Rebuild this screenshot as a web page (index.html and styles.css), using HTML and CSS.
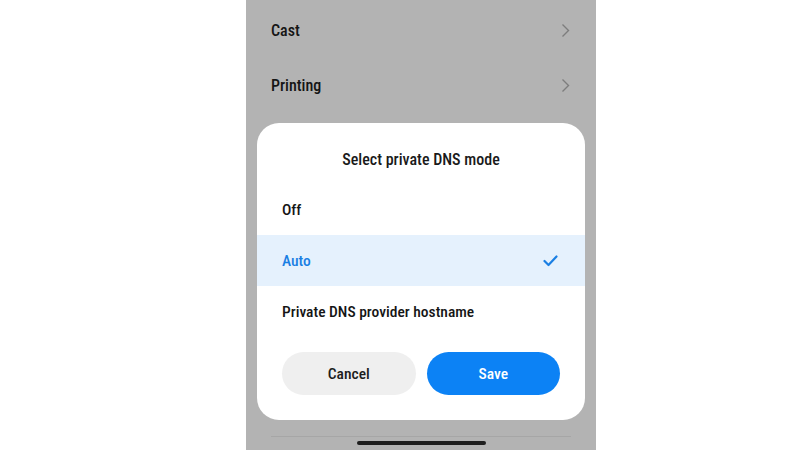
FILE: index.html
```html
<!DOCTYPE html>
<html>
<head>
<meta charset="utf-8">
<link rel="stylesheet" href="styles.css">
</head>
<body>
<div class="phone">
  <div class="list">
    <div class="row"><span>Cast</span>
      <svg class="chev" width="9" height="15" viewBox="0 0 9 15"><path d="M1.5 1.5 L7.5 7.5 L1.5 13.5" fill="none" stroke="#7d7d7d" stroke-width="1.4"/></svg>
    </div>
    <div class="row"><span>Printing</span>
      <svg class="chev" width="9" height="15" viewBox="0 0 9 15"><path d="M1.5 1.5 L7.5 7.5 L1.5 13.5" fill="none" stroke="#7d7d7d" stroke-width="1.4"/></svg>
    </div>
  </div>
  <div class="dialog">
    <div class="title">Select private DNS mode</div>
    <div class="opt">Off</div>
    <div class="opt sel"><span>Auto</span>
      <svg width="15" height="12" viewBox="0 0 15 12"><path d="M1.5 6 L5.5 10 L13.5 1.5" fill="none" stroke="#1a7fe3" stroke-width="2.2" stroke-linecap="round" stroke-linejoin="round"/></svg>
    </div>
    <div class="opt">Private DNS provider hostname</div>
    <div class="btns">
      <div class="btn cancel">Cancel</div>
      <div class="btn save">Save</div>
    </div>
  </div>
  <div class="bottom">
    <div class="divider"></div>
    <div class="home"></div>
  </div>
</div>
</body>
</html>
```
FILE: styles.css
```css
html, body {
  margin: 0;
  padding: 0;
  background: #ffffff;
}
body {
  font-family: Roboto, "Noto Sans", sans-serif;
  font-stretch: condensed;
  font-weight: 500;
  color: #1c1c1c;
}
.phone {
  width: 350px;
  height: 450px;
  margin-left: 246px;
  background: #b3b3b3;
  display: flex;
  flex-direction: column;
  overflow: hidden;
}
.list {
  display: flex;
  flex-direction: column;
  padding-top: 3px;
}
.row {
  height: 55px;
  display: flex;
  align-items: center;
  justify-content: space-between;
  padding: 0 25px 0 25px;
  font-size: 16px;
  color: #151515;
}
.chev {
  margin-right: 1px;
}
.dialog {
  margin: 10px 11px 0 11px;
  height: 297px;
  background: #ffffff;
  border-radius: 22px;
  display: flex;
  flex-direction: column;
  box-sizing: border-box;
}
.title {
  text-align: center;
  font-size: 16px;
  line-height: 20px;
  padding-top: 27px;
  height: 61px;
  box-sizing: border-box;
  color: #1a1a1a;
}
.opt {
  height: 51px;
  display: flex;
  align-items: center;
  justify-content: space-between;
  padding: 0 27px 0 25px;
  font-size: 15.5px;
  color: #151515;
}
.opt.sel {
  background: #e5f1fd;
  color: #1a7fe3;
}
.btns {
  display: flex;
  gap: 11px;
  padding: 15px 25px 0 25px;
}
.btn {
  flex: 1;
  height: 43px;
  border-radius: 22px;
  display: flex;
  align-items: center;
  justify-content: center;
  font-size: 15.5px;
}
.cancel {
  background: #efefef;
  color: #1c1c1c;
}
.save {
  background: #0c82f5;
  color: #ffffff;
}
.bottom {
  margin-top: 16px;
  display: flex;
  flex-direction: column;
  align-items: center;
}
.divider {
  width: 300px;
  height: 1px;
  background: #a6a6a6;
}
.home {
  margin-top: 4px;
  width: 129px;
  height: 4px;
  border-radius: 2px;
  background: #1e1e1e;
}
```
